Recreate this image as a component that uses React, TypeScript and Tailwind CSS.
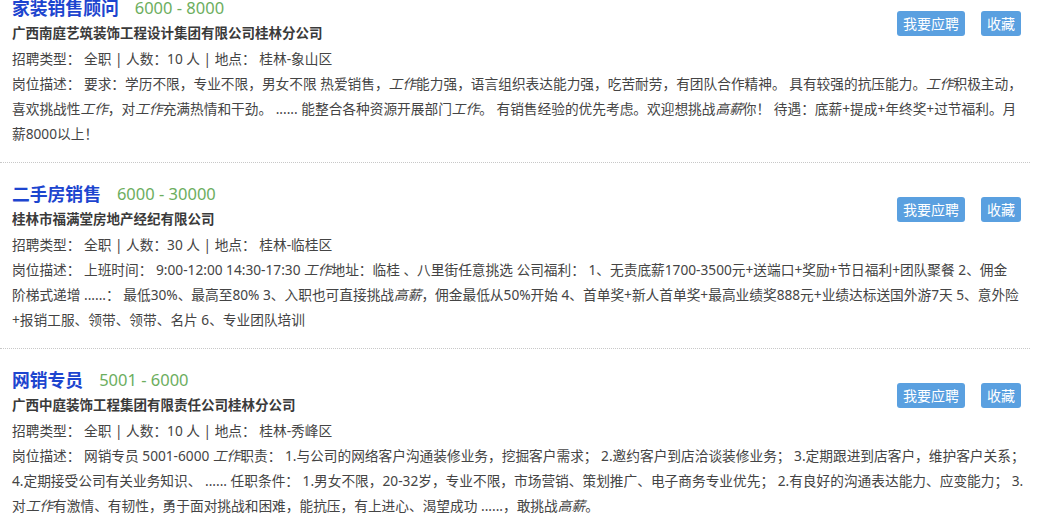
import * as React from "react";

type Part = string | { em: string };

type Job = {
  title: string;
  salary: string;
  company: string;
  meta: string;
  lines: Part[][];
};

const jobs: Job[] = [
  {
    title: "家装销售顾问",
    salary: "6000 - 8000",
    company: "广西南庭艺筑装饰工程设计集团有限公司桂林分公司",
    meta: "招聘类型： 全职 | 人数：10 人 | 地点： 桂林-象山区",
    lines: [
      [
        "岗位描述： 要求：学历不限，专业不限，男女不限 热爱销售，",
        { em: "工作" },
        "能力强，语言组织表达能力强，吃苦耐劳，有团队合作精神。 具有较强的抗压能力。",
        { em: "工作" },
        "积极主动，",
      ],
      [
        "喜欢挑战性",
        { em: "工作" },
        "，对",
        { em: "工作" },
        "充满热情和干劲。 ...... 能整合各种资源开展部门",
        { em: "工作" },
        "。 有销售经验的优先考虑。欢迎想挑战",
        { em: "高薪" },
        "你！ 待遇：底薪+提成+年终奖+过节福利。月",
      ],
      ["薪8000以上！"],
    ],
  },
  {
    title: "二手房销售",
    salary: "6000 - 30000",
    company: "桂林市福满堂房地产经纪有限公司",
    meta: "招聘类型： 全职 | 人数：30 人 | 地点： 桂林-临桂区",
    lines: [
      [
        "岗位描述： 上班时间： 9:00-12:00 14:30-17:30 ",
        { em: "工作" },
        "地址：临桂 、八里街任意挑选 公司福利： 1、无责底薪1700-3500元+送端口+奖励+节日福利+团队聚餐 2、佣金",
      ],
      [
        "阶梯式递增 ......： 最低30%、最高至80% 3、入职也可直接挑战",
        { em: "高薪" },
        "，佣金最低从50%开始 4、首单奖+新人首单奖+最高业绩奖888元+业绩达标送国外游7天 5、意外险",
      ],
      ["+报销工服、领带、领带、名片 6、专业团队培训"],
    ],
  },
  {
    title: "网销专员",
    salary: "5001 - 6000",
    company: "广西中庭装饰工程集团有限责任公司桂林分公司",
    meta: "招聘类型： 全职 | 人数：10 人 | 地点： 桂林-秀峰区",
    lines: [
      [
        "岗位描述： 网销专员 5001-6000 ",
        { em: "工作" },
        "职责： 1.与公司的网络客户沟通装修业务，挖掘客户需求； 2.邀约客户到店洽谈装修业务； 3.定期跟进到店客户，维护客户关系；",
      ],
      [
        "4.定期接受公司有关业务知识、 ...... 任职条件： 1.男女不限，20-32岁，专业不限，市场营销、策划推广、电子商务专业优先； 2.有良好的沟通表达能力、应变能力； 3.",
      ],
      [
        "对",
        { em: "工作" },
        "有激情、有韧性，勇于面对挑战和困难，能抗压，有上进心、渴望成功 ......，敢挑战",
        { em: "高薪" },
        "。",
      ],
    ],
  },
];

function JobItem({ job }: { job: Job }) {
  return (
    <div className="border-b border-dotted border-[#c8c8c8] pl-[12px] pr-[9px] pt-[18px] pb-[16px]">
      <div className="flex items-start justify-between">
        <div>
          <div className="flex h-[26px] items-center gap-[16px] leading-[26px]">
            <span className="text-[17.8px] font-bold text-[#1d45cf]">{job.title}</span>
            <span className="text-[16.5px] text-[#6cae5e]">{job.salary}</span>
          </div>
          <div className="text-[13.5px] font-bold leading-[25px] text-[#3a3a3a]">
            {job.company}
          </div>
        </div>
        <div className="flex gap-[16px] pt-[16px]">
          <button className="h-[25px] rounded-[3px] bg-[#5aa0e0] px-[6px] text-[14px] leading-[25px] text-white">
            我要应聘
          </button>
          <button className="h-[25px] rounded-[3px] bg-[#5aa0e0] px-[6px] text-[14px] leading-[25px] text-white">
            收藏
          </button>
        </div>
      </div>
      <div className="whitespace-nowrap text-[13.7px] leading-[25px] text-[#444]">
        {job.meta}
      </div>
      {job.lines.map((line, i) => (
        <div key={i} className="whitespace-pre text-[13.7px] leading-[25px] text-[#444]">
          {line.map((p, j) =>
            typeof p === "string" ? (
              <React.Fragment key={j}>{p}</React.Fragment>
            ) : (
              <em key={j} className="italic">
                {p.em}
              </em>
            )
          )}
        </div>
      ))}
    </div>
  );
}

export default function App() {
  return (
    <div
      className="h-[529px] w-[1039px] overflow-hidden bg-white"
      style={{ fontFamily: '"Noto Sans", "Noto Sans CJK SC", sans-serif' }}
    >
      <div className="mt-[-23px] w-[1030px]">
        {jobs.map((job) => (
          <JobItem key={job.title} job={job} />
        ))}
      </div>
    </div>
  );
}
